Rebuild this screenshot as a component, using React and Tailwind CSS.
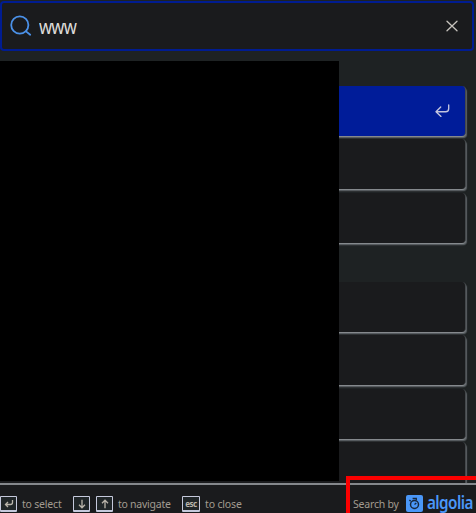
const FONT = "font-['Noto_Sans','Open_Sans',sans-serif]";

function Key({ children, width = "w-[17px]" }) {
  return (
    <span className={`${width} h-4 shrink-0 rounded-[1px] border border-b-2 border-[#c5c9dc] bg-[#202628] flex items-center justify-center text-[#b9b4aa]`}>
      {children}
    </span>
  );
}

function Hit({ selected, tail }) {
  return (
    <li
      className={`h-[50px] shrink-0 rounded flex items-center justify-end pr-[15px] border-r border-[#45494c] shadow-[0_1px_0_#85898d,1px_2px_1px_#5a5f63,0_2px_2px_#44494c] ${
        selected ? "bg-[#001c99]" : "bg-[#1a1b1d]"
      } ${tail ? "rounded-b-none" : ""}`}
    >
      {selected && (
        <svg width="15" height="14" viewBox="0 0 15 14" fill="none" stroke="#c3c5df" strokeWidth="1.35" strokeLinecap="round" strokeLinejoin="round">
          <path d="M13.7 1v3.5q0 3.2-3 3.2H1M5.7 3L1 7.7l5 4.7" />
        </svg>
      )}
    </li>
  );
}

export default function App() {
  return (
    <div className={`relative flex h-[513px] w-[476px] flex-col overflow-hidden bg-[#1e2223] ${FONT}`}>
      <header className="mt-px flex h-[50px] w-[474px] shrink-0 items-center rounded-sm border-2 border-[#001c91] bg-[#1a1b1d] pl-2 pr-[14px]">
        <svg width="23" height="23" viewBox="0 0 23 23" fill="none" stroke="#4b91e8" strokeWidth="1.8" strokeLinecap="round">
          <circle cx="9.8" cy="10" r="8.6" />
          <path d="M16 16.4l4.2 3.4" />
        </svg>
        <span className="ml-[6px] mt-[2px] inline-block origin-left scale-x-[0.88] text-[19px] leading-5 tracking-[-0.9px] text-[#deddda]">www</span>
        <svg className="ml-auto" width="12" height="12" viewBox="0 0 12 12" stroke="#c6c3bd" strokeWidth="1.3" strokeLinecap="round">
          <path d="M1 1.2l10 9.6M11 1.2L1 10.8" />
        </svg>
      </header>

      <main className="flex h-[432px] shrink-0 flex-col overflow-hidden pr-[10px] pt-[35px]">
        <ul className="flex flex-col gap-[3.3px]">
          <Hit selected />
          <Hit />
          <Hit />
        </ul>
        <ul className="mt-[39.4px] flex flex-col gap-[3.3px]">
          <Hit />
          <Hit />
          <Hit />
          <Hit tail />
        </ul>
      </main>

      <footer className="flex h-[30px] shrink-0 items-start border-t-2 border-[#85888c] bg-[#1a1b1d] pt-[11px] text-[10.5px] leading-4 text-[#a29b90]">
        <Key>
          <svg width="10" height="10" viewBox="0 0 10 10" fill="none" stroke="currentColor" strokeWidth="1.3">
            <path d="M8.5 1v2.5q0 2-2 2H1.5M4 3L1.5 5.5 4 8" />
          </svg>
        </Key>
        <span className="ml-[5px] w-[51px] whitespace-nowrap tracking-[-0.2px]">to select</span>
        <Key>
          <svg width="10" height="10" viewBox="0 0 10 10" fill="none" stroke="currentColor" strokeWidth="1.3">
            <path d="M5 .8v8M2 5.8l3 3 3-3" />
          </svg>
        </Key>
        <span className="w-[6px]" />
        <Key>
          <svg width="10" height="10" viewBox="0 0 10 10" fill="none" stroke="currentColor" strokeWidth="1.3">
            <path d="M5 9.2v-8M2 4.2l3-3 3 3" />
          </svg>
        </Key>
        <span className="ml-[5px] w-[64px] whitespace-nowrap tracking-[-0.25px]">to navigate</span>
        <Key width="w-[18px]">
          <span className="text-[8px] font-bold leading-[10px] tracking-[-0.4px]">esc</span>
        </Key>
        <span className="ml-[5px] whitespace-nowrap tracking-[-0.15px]">to close</span>
        <div className="ml-auto flex shrink-0 items-start">
          <span className="w-[53px] whitespace-nowrap tracking-[-0.2px]">Search by</span>
          <svg className="-mt-px" width="17" height="18" viewBox="0 0 17 18">
            <rect width="17" height="17" rx="2" fill="#4a97f8" />
            <circle cx="8.5" cy="9.5" r="4" fill="none" stroke="#18283d" strokeWidth="1.5" />
            <path d="M6.6 3.5h3.7v1.6M3.4 5l1.3 1.2M8.5 9.5l1.8-1.5" stroke="#18283d" strokeWidth="1.3" fill="none" />
          </svg>
          <span className="ml-1 -mt-[3px] w-[49px] whitespace-nowrap text-[18px] font-semibold leading-[18px] tracking-[-0.7px] text-[#4a97f8]">
            <span className="inline-block origin-left scale-x-[0.85]">algolia</span>
          </span>
        </div>
      </footer>

      <div className="absolute left-0 top-[61px] h-[420px] w-[339px] bg-black" />
      <div className="absolute left-[346px] top-[476px] h-[37px] w-[130px] border-l-4 border-t-4 border-[#fb0000]" />
    </div>
  );
}
